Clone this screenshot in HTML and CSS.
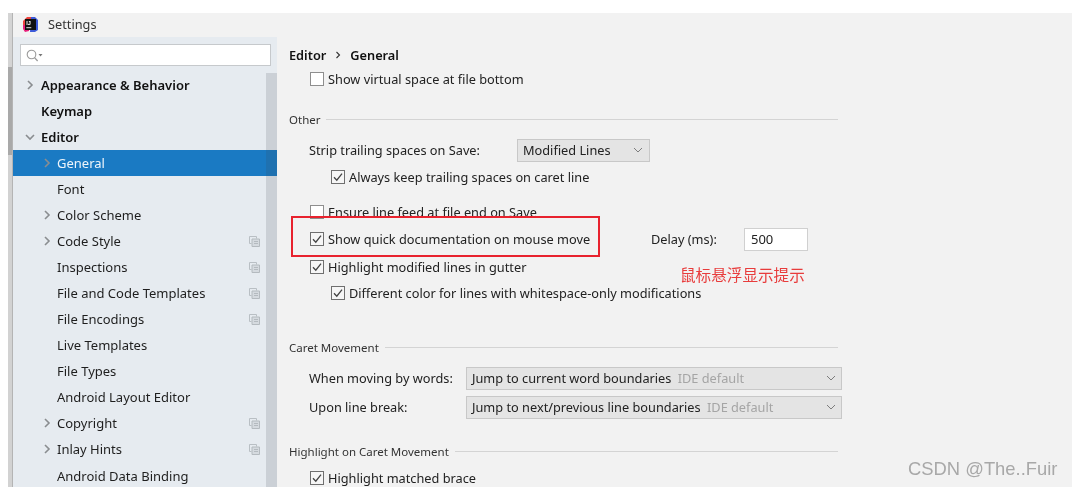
FILE: index.html
```html
<!DOCTYPE html>
<html lang="en">
<head>
<meta charset="utf-8">
<title>Settings</title>
<link rel="stylesheet" href="styles.css">
</head>
<body>
<svg class="defs" width="0" height="0" aria-hidden="true">
  <symbol id="chev" viewBox="0 0 10 10"><path d="M3 1l4 4-4 4" fill="none" stroke="#8a8d90" stroke-width="1.6"/></symbol>
  <symbol id="copy" viewBox="0 0 11 11"><path d="M.5.5h7v2M.5.5v7h2" fill="none" stroke="#b9bfc4"/><path d="M3 3h7.5v7.5H3z" fill="#d5dadf" stroke="#b4babf"/><path d="M5 5.5h4M5 7.5h4" stroke="#b4babf"/></symbol>
  <symbol id="check" viewBox="0 0 14 14"><path d="M3 7.2l2.8 3L11 3.6" fill="none" stroke="#444" stroke-width="1.3"/></symbol>
  <symbol id="down" viewBox="0 0 10 6"><path d="M1 1l4 4 4-4" fill="none" stroke="#7d7d7d" stroke-width="1"/></symbol>
</svg>
<div class="window">
  <div class="strip"></div>
  <div class="app">
    <header class="titlebar">
      <svg class="logo" width="17" height="17" viewBox="0 0 17 17">
        <path d="M1 5l4-4h5v8H1z" fill="#f0443e"/>
        <path d="M1 9h6v6l-4 1-2-3z" fill="#e8207c"/>
        <path d="M9 1h4l3 3v10l-3 2H8z" fill="#3d5bd9"/>
        <rect x="3" y="3" width="11" height="11" fill="#111"/>
        <text x="4.3" y="8.6" class="logo-text">IJ</text>
        <rect x="4.3" y="11.2" width="5" height="1" fill="#ddd"/>
      </svg>
      <span>Settings</span>
    </header>
    <div class="body">
      <aside class="sidebar">
        <div class="search">
          <svg width="17" height="13" viewBox="0 0 17 13"><circle cx="5.5" cy="5.5" r="4.3" fill="none" stroke="#9a9a9a" stroke-width="1.1"/><path d="M8.6 8.6l3 3.4" stroke="#9a9a9a" stroke-width="1.3"/><path d="M12.5 5h4l-2 2.5z" fill="#777"/></svg>
        </div>
        <ul class="tree">
          <li class="node top"><svg class="tw"><use href="#chev"/></svg><b>Appearance &amp; Behavior</b></li>
          <li class="node top"><b>Keymap</b></li>
          <li class="node top"><svg class="tw open"><use href="#chev"/></svg><b>Editor</b></li>
          <li class="node child selected"><svg class="tw"><use href="#chev"/></svg><span>General</span></li>
          <li class="node child"><span>Font</span></li>
          <li class="node child"><svg class="tw"><use href="#chev"/></svg><span>Color Scheme</span></li>
          <li class="node child"><svg class="tw"><use href="#chev"/></svg><span>Code Style</span><svg class="cp"><use href="#copy"/></svg></li>
          <li class="node child"><span>Inspections</span><svg class="cp"><use href="#copy"/></svg></li>
          <li class="node child"><span>File and Code Templates</span><svg class="cp"><use href="#copy"/></svg></li>
          <li class="node child"><span>File Encodings</span><svg class="cp"><use href="#copy"/></svg></li>
          <li class="node child"><span>Live Templates</span></li>
          <li class="node child"><span>File Types</span></li>
          <li class="node child"><span>Android Layout Editor</span></li>
          <li class="node child"><svg class="tw"><use href="#chev"/></svg><span>Copyright</span><svg class="cp"><use href="#copy"/></svg></li>
          <li class="node child"><svg class="tw"><use href="#chev"/></svg><span>Inlay Hints</span><svg class="cp"><use href="#copy"/></svg></li>
          <li class="node child"><span>Android Data Binding</span></li>
        </ul>
        <div class="scrollbar"></div>
      </aside>
      <main class="main">
        <div class="crumbs"><b>Editor</b><svg class="crumb-sep" width="6" height="8" viewBox="0 0 6 8"><path d="M1.5 1l3 3-3 3" fill="none" stroke="#333" stroke-width="1.1"/></svg><b>General</b></div>
        <div class="row opt"><span class="cb"></span>Show virtual space at file bottom</div>
        <div class="head mt18"><span>Other</span><i></i></div>
        <div class="row ind mt9"><label class="strip-label">Strip trailing spaces on Save:</label><div class="combo short"><span>Modified Lines</span><svg width="10" height="6"><use href="#down"/></svg></div></div>
        <div class="row opt sub mt3"><span class="cb on"><svg width="14" height="14"><use href="#check"/></svg></span>Always keep trailing spaces on caret line</div>
        <div class="row opt mt11"><span class="cb"></span>Ensure line feed at file end on Save</div>
        <div class="row opt mt3 delay-row"><span class="cb on"><svg width="14" height="14"><use href="#check"/></svg></span><span class="quick">Show quick documentation on mouse move</span><span class="delay">Delay (ms):</span><span class="input">500</span></div>
        <div class="row opt mt4"><span class="cb on"><svg width="14" height="14"><use href="#check"/></svg></span>Highlight modified lines in gutter</div>
        <div class="row opt sub mt2"><span class="cb on"><svg width="14" height="14"><use href="#check"/></svg></span>Different color for lines with whitespace-only modifications</div>
        <div class="head mt32"><span>Caret Movement</span><i></i></div>
        <div class="row ind mt9"><label class="caret-label">When moving by words:</label><div class="combo wide"><span>Jump to current word boundaries <em>IDE default</em></span><svg width="10" height="6"><use href="#down"/></svg></div></div>
        <div class="row ind mt5"><label class="caret-label">Upon line break:</label><div class="combo wide"><span>Jump to next/previous line boundaries <em>IDE default</em></span><svg width="10" height="6"><use href="#down"/></svg></div></div>
        <div class="head mt22"><span>Highlight on Caret Movement</span><i></i></div>
        <div class="row opt mt5"><span class="cb on"><svg width="14" height="14"><use href="#check"/></svg></span>Highlight matched brace</div>
      </main>
    </div>
  </div>
  <div class="redbox"></div>
  <div class="note">鼠标悬浮显示提示</div>
  <div class="mark">CSDN @The..Fuir</div>
</div>
</body>
</html>
```
FILE: styles.css
```css
* { box-sizing: border-box; }
html, body { margin: 0; background: #fff; }
body { width: 1072px; height: 487px; padding: 13px 0 0 8px; overflow: hidden; font-family: "Noto Sans", "Open Sans", sans-serif; font-size: 13px; color: #222; }
.defs { position: absolute; }
.window { position: relative; width: 1064px; height: 474px; display: flex; overflow: hidden; background: #f2f2f2; filter: blur(.4px); }
.strip { width: 5px; flex: none; background: linear-gradient(#d4d4d4 0 54px, #a9a9a9 54px 142px, #d2d2d2 142px); border-right: 1px solid #b4b4b4; }
.app { flex: 1; display: flex; flex-direction: column; min-width: 0; }
.titlebar { height: 22px; margin-bottom: 2px; flex: none; display: flex; align-items: center; padding-left: 9px; gap: 9px; font-size: 12.75px; color: #333; }
.logo { flex: none; }
.logo-text { font: 700 5.5px "Liberation Sans", sans-serif; fill: #fff; }
.body { flex: 1; display: flex; min-height: 0; }
.sidebar { position: relative; width: 264px; flex: none; background: #e6ebf0; }
.search { margin: 7px 6px 6px 7px; height: 22px; background: #fff; border: 1px solid #c6c9cc; display: flex; align-items: center; padding-left: 5px; }
.tree { list-style: none; margin: 0; padding: 0; }
.node { height: 26px; display: flex; align-items: center; position: relative; color: #1e1e1e; }
.node:last-child { margin-top: 1px; }
.node b { font-weight: 600; color: #111; }
.top { padding-left: 28px; }
.child { padding-left: 44px; }
.tw { position: absolute; width: 10px; height: 10px; top: 8px; }
.top .tw { left: 12px; }
.child .tw { left: 29px; }
.tw.open { transform: rotate(90deg); }
.selected { background: #1a7ac3; color: #eef5fb; }
.selected .tw path { stroke: #d0e0ee; }
.cp { position: absolute; left: 236px; top: 8px; width: 11px; height: 11px; }
.scrollbar { position: absolute; top: 36px; right: 0; bottom: 0; width: 11px; background: rgba(60,70,80,.16); }
.main { flex: 1; padding-left: 12px; min-width: 0; font-size: 12.75px; }
.crumbs { height: 30px; padding-top: 6px; display: flex; align-items: center; gap: 9px; color: #111; }
.crumbs b { font-weight: 600; }
.row { height: 24px; display: flex; align-items: center; white-space: nowrap; }
.opt { padding-left: 21px; }
.opt.sub { padding-left: 42px; }
.ind { padding-left: 20px; }
.cb { width: 14px; height: 14px; flex: none; margin-right: 4px; background: #fff; border: 1px solid #8e8e8e; display: block; }
.cb svg { display: block; margin: -1px; }
.cb.on { background: #f6f6f6; border-color: #6f6f6f; }
.head { height: 20px; display: flex; align-items: center; width: 549px; font-size: 11.5px; color: #333; }
.head i { flex: 1; height: 1px; background: #d4d4d4; margin-left: 6px; }
.combo { height: 23px; display: flex; align-items: center; justify-content: space-between; background: #e4e4e4; border: 1px solid #c8c8c8; padding: 0 6px 0 5px; }
.combo em { font-style: normal; color: #a5a5a5; margin-left: 3px; }
.short { width: 133px; }
.wide { width: 376px; padding-right: 5px; }
.strip-label { width: 208px; }
.caret-label { width: 157px; }
.quick { width: 323px; }
.delay { width: 93px; }
.input { width: 64px; height: 23px; background: #fff; border: 1px solid #d0d0d0; padding: 0 6px; font-size: 13px; line-height: 20px; }
.mt2 { margin-top: 2px; } .mt3 { margin-top: 3px; } .mt4 { margin-top: 4px; } .mt5 { margin-top: 5px; }
.mt9 { margin-top: 9px; } .mt11 { margin-top: 11px; } .mt18 { margin-top: 18px; } .mt22 { margin-top: 22px; } .mt32 { margin-top: 32px; }
.redbox { position: absolute; left: 283px; top: 203px; width: 309px; height: 41px; border: 2px solid #e8222e; }
.note { position: absolute; left: 672px; top: 250px; font: 15.6px/22px "Noto Sans CJK SC", sans-serif; color: #e83c3c; white-space: nowrap; }
.mark { position: absolute; left: 900px; top: 445px; font: 18.4px/22px "Liberation Sans", sans-serif; color: #a8a8a8; white-space: nowrap; }
```
